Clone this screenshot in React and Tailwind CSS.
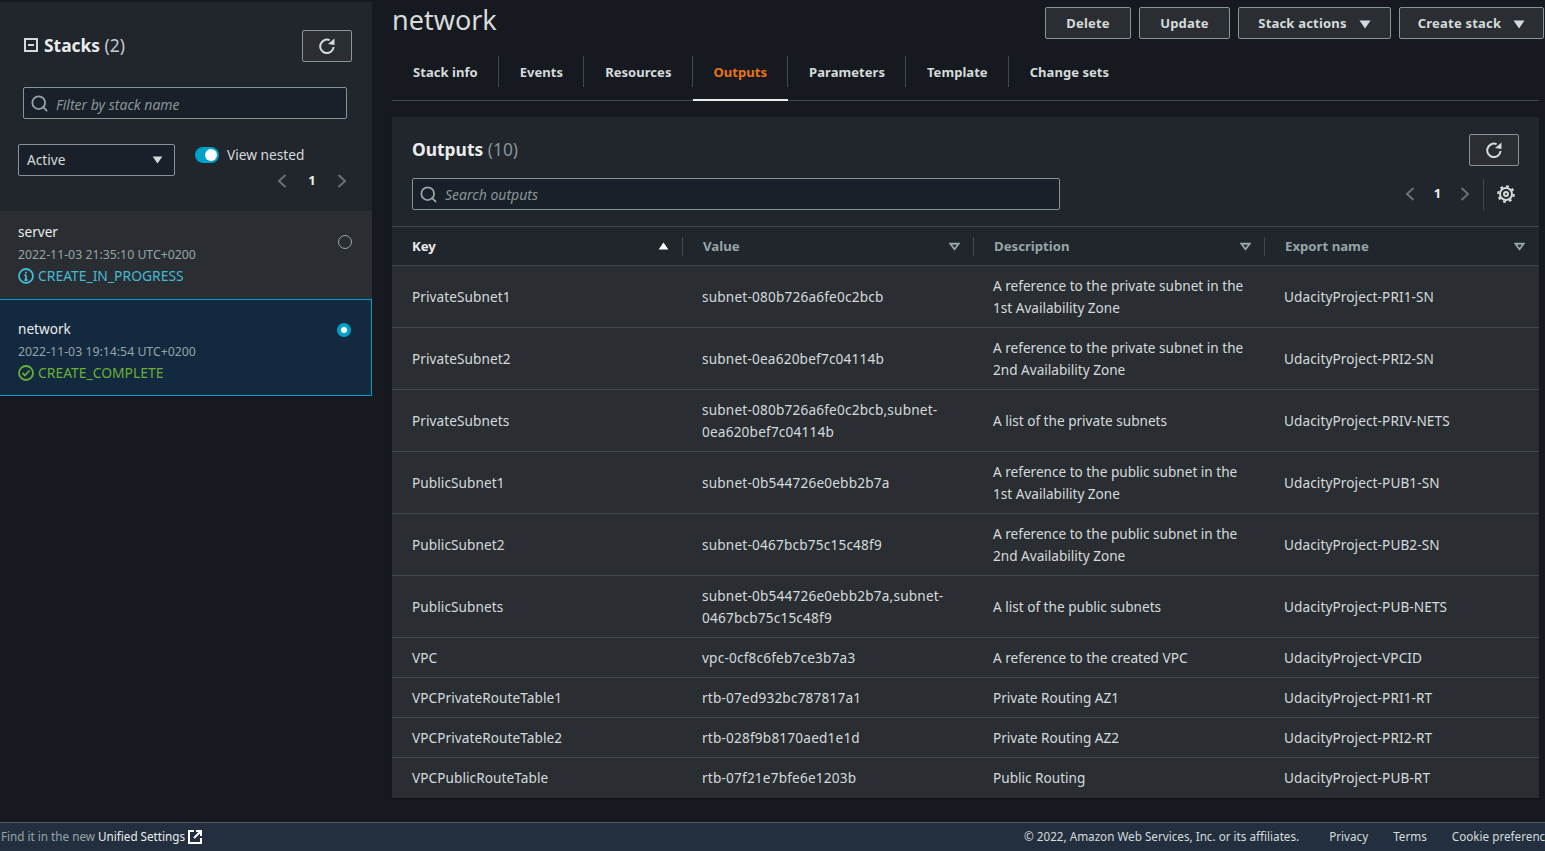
import React from "react";
import {Search} from "lucide-react";

const rows = [
    {key: "PrivateSubnet1", value: "subnet-080b726a6fe0c2bcb", desc: "A reference to the private subnet in the 1st Availability Zone", exp: "UdacityProject-PRI1-SN", tall: true},
    {key: "PrivateSubnet2", value: "subnet-0ea620bef7c04114b", desc: "A reference to the private subnet in the 2nd Availability Zone", exp: "UdacityProject-PRI2-SN", tall: true},
    {key: "PrivateSubnets", value: "subnet-080b726a6fe0c2bcb,subnet-0ea620bef7c04114b", desc: "A list of the private subnets", exp: "UdacityProject-PRIV-NETS", tall: true},
    {key: "PublicSubnet1", value: "subnet-0b544726e0ebb2b7a", desc: "A reference to the public subnet in the 1st Availability Zone", exp: "UdacityProject-PUB1-SN", tall: true},
    {key: "PublicSubnet2", value: "subnet-0467bcb75c15c48f9", desc: "A reference to the public subnet in the 2nd Availability Zone", exp: "UdacityProject-PUB2-SN", tall: true},
    {key: "PublicSubnets", value: "subnet-0b544726e0ebb2b7a,subnet-0467bcb75c15c48f9", desc: "A list of the public subnets", exp: "UdacityProject-PUB-NETS", tall: true},
    {key: "VPC", value: "vpc-0cf8c6feb7ce3b7a3", desc: "A reference to the created VPC", exp: "UdacityProject-VPCID"},
    {key: "VPCPrivateRouteTable1", value: "rtb-07ed932bc787817a1", desc: "Private Routing AZ1", exp: "UdacityProject-PRI1-RT"},
    {key: "VPCPrivateRouteTable2", value: "rtb-028f9b8170aed1e1d", desc: "Private Routing AZ2", exp: "UdacityProject-PRI2-RT"},
    {key: "VPCPublicRouteTable", value: "rtb-07f21e7bfe6e1203b", desc: "Public Routing", exp: "UdacityProject-PUB-RT"},
];

const tabs = ["Stack info", "Events", "Resources", "Outputs", "Parameters", "Template", "Change sets"];

const Caret = ({className = "w-[12px] h-[9px]", up = false}) => (
    <svg viewBox="0 0 12 9" className={className} fill="currentColor">
        <path d={up ? "M6 0.5 L11.5 8.5 L0.5 8.5 Z" : "M0.5 0.5 L11.5 0.5 L6 8.5 Z"}/>
    </svg>
);

const FilterCaret = () => (
    <svg viewBox="0 0 12 9" className="w-[11px] h-[9px] text-[#95a5a6]" fill="none" stroke="currentColor" strokeWidth="2">
        <path d="M1.5 1.5 L10.5 1.5 L6 7.5 Z"/>
    </svg>
);

const RefreshIcon = () => (
    <svg viewBox="0 0 16 16" className="w-[16px] h-[16px]" fill="none" stroke="currentColor" strokeWidth="2">
        <path d="M14.6 9 A6.7 6.7 0 1 1 10.6 2.2"/>
        <path d="M15.5 0.5 V7 L9 6 Z" fill="currentColor" stroke="none"/>
    </svg>
);

const GearIcon = () => (
    <svg viewBox="0 0 18 18" className="w-[18px] h-[18px] text-[#d5dbdb]" fill="none" stroke="currentColor" strokeWidth="2">
        <circle cx="9" cy="9" r="6"/>
        <circle cx="9" cy="9" r="7.8" strokeDasharray="2.9 3.2"/>
        <circle cx="9" cy="9" r="2"/>
    </svg>
);

const RefreshButton = () => (
    <button className="w-[50px] h-[32px] flex items-center justify-center border border-[#879596] rounded-[2px] bg-[#2a2e33] text-[#d5dbdb]">
        <RefreshIcon/>
    </button>
);

const Chevron = ({right = false}) => (
    <svg viewBox="0 0 10 14" className="w-[10px] h-[14px] text-[#687078]" fill="none" stroke="currentColor" strokeWidth="2">
        <path d={right ? "M1.5 1 L8 7 L1.5 13" : "M8.5 1 L2 7 L8.5 13"}/>
    </svg>
);

const Pager = ({width}) => (
    <div className="flex items-center">
        <Chevron/>
        <span className={`${width} text-center text-[13px] font-bold text-[#eaeded]`}>1</span>
        <Chevron right/>
    </div>
);

const ActionButton = ({label, caret, width}) => (
    <button className={`${width} h-[32px] pt-[2px] flex items-center justify-center gap-[12px] border border-[#879596] rounded-[2px] bg-[#2a2e33] text-[#d5dbdb] text-[13px] font-bold tracking-[0.2px]`}>
        {label}
        {caret && <Caret/>}
    </button>
);

const StackRow = ({name, time, status, selected}) => (
    <div className={selected
        ? "h-[97px] pl-[18px] pr-[20px] pt-[19px] flex justify-between bg-[#12293f] border-y border-r border-[#00a1c9]"
        : "h-[88px] pl-[18px] pr-[20px] pt-[11px] flex justify-between bg-[#2a2e33]"}>
        <div>
            <div className="text-[13.6px] leading-[20px] text-[#eaeded]">{name}</div>
            <div className="mt-[3px] text-[12.3px] leading-[20px] text-[#95a5a6]">{time}</div>
            <div className={`flex items-center gap-[4px] text-[13.9px] leading-[21px] ${selected ? "text-[#6aaf35]" : "text-[#44b9d6]"}`}>
                {selected ? (
                    <svg viewBox="0 0 16 16" className="w-[16px] h-[16px]" fill="none" stroke="currentColor" strokeWidth="1.8">
                        <circle cx="8" cy="8" r="7"/>
                        <path d="M4.5 8 L7 10.5 L11.5 5.5"/>
                    </svg>
                ) : (
                    <svg viewBox="0 0 16 16" className="w-[16px] h-[16px]" fill="none" stroke="currentColor" strokeWidth="1.8">
                        <circle cx="8" cy="8" r="7"/>
                        <path d="M8 7 V12 M6.5 12 H9.5 M6.5 7 H8 M8 3.8 V5.4"/>
                    </svg>
                )}
                {status}
            </div>
        </div>
        {selected ? (
            <div className="mt-[4px] w-[14px] h-[14px] rounded-full bg-[#00a1c9] flex items-center justify-center">
                <div className="w-[6px] h-[6px] rounded-full bg-white"/>
            </div>
        ) : (
            <div className="mt-[13px] w-[14px] h-[14px] rounded-full border border-[#95a5a6]"/>
        )}
    </div>
);

const HeadCell = ({label, active, last}) => (
    <div className="relative flex items-center justify-between pl-[20px] pr-[14px]">
        <span className={`pt-[2px] text-[13.2px] font-bold ${active ? "text-[#eaeded]" : "text-[#95a5a6]"}`}>{label}</span>
        {active ? <Caret up className="w-[11px] h-[8px] text-white"/> : <FilterCaret/>}
        {!last && <div className="absolute right-0 top-[10px] h-[19px] w-px bg-[#414750]"/>}
    </div>
);

const App = () => {
    return (
        <div className="h-[851px] w-[1545px] overflow-hidden flex flex-col bg-[#16191f] font-['Noto_Sans',sans-serif] text-[13px] text-[#d5dbdb]">
            <div className="flex flex-1 min-h-0">
                <aside className="w-[372px] shrink-0">
                    <div className="h-[209px] mt-[2px] bg-[#21252c]">
                        <div className="flex items-start justify-between pl-[24px] pr-[20px] pt-[28px]">
                            <div className="flex items-center gap-[6px] h-[30px]">
                                <div className="w-[14px] h-[14px] border-2 border-[#d5dbdb] flex items-center justify-center">
                                    <div className="w-[6px] h-[2px] bg-[#d5dbdb]"/>
                                </div>
                                <h2 className="text-[17.4px] leading-[30px] text-[#eaeded]">
                                    <span className="font-bold">Stacks</span> <span className="text-[#c4cbd1]">(2)</span>
                                </h2>
                            </div>
                            <RefreshButton/>
                        </div>
                        <div className="mt-[25px] ml-[23px] w-[324px] h-[32px] flex items-center gap-[7px] pl-[6px] border border-[#879596] rounded-[2px] bg-[#1a2029]">
                            <Search className="w-[19px] h-[19px] text-[#95a5a6]" strokeWidth={2.25}/>
                            <span className="pt-[2px] italic text-[14px] text-[#879596]">Filter by stack name</span>
                        </div>
                        <div className="mt-[25px] ml-[18px] flex items-start">
                            <div className="w-[157px] h-[32px] flex items-center justify-between pl-[8px] pr-[11px] border border-[#879596] rounded-[2px] bg-[#1a2029] text-[13.7px] text-[#d5dbdb]">
                                <span>Active</span>
                                <Caret className="w-[11px] h-[8px] text-[#d5dbdb]"/>
                            </div>
                            <div className="ml-[20px] w-[158px]">
                                <div className="flex items-center gap-[8px] h-[22px]">
                                    <div className="w-[24px] h-[16px] rounded-full bg-[#00a1c9] flex items-center justify-end pr-[2px]">
                                        <div className="w-[12px] h-[12px] rounded-full bg-white"/>
                                    </div>
                                    <span className="text-[13.7px] text-[#d5dbdb]">View nested</span>
                                </div>
                                <div className="flex justify-end mt-[5px] pr-[6px]">
                                    <Pager width="w-[50px]"/>
                                </div>
                            </div>
                        </div>
                    </div>
                    <StackRow name="server" time="2022-11-03 21:35:10 UTC+0200" status="CREATE_IN_PROGRESS"/>
                    <StackRow name="network" time="2022-11-03 19:14:54 UTC+0200" status="CREATE_COMPLETE" selected/>
                </aside>

                <main className="ml-[20px] w-[1147px]">
                    <div className="flex items-start justify-between pt-[7px] h-[39px]">
                        <h1 className="text-[27px] leading-[26px] text-[#d5dbdb]">network</h1>
                        <div className="flex gap-[8px] mr-[-5px]">
                            <ActionButton label="Delete" width="w-[86px]"/>
                            <ActionButton label="Update" width="w-[91px]"/>
                            <ActionButton label="Stack actions" caret width="w-[153px]"/>
                            <ActionButton label="Create stack" caret width="w-[145px]"/>
                        </div>
                    </div>
                    <div className="mt-[12px] h-[50px] flex items-center border-b border-[#414750]">
                        {tabs.map((tab, i) => (
                            <div key={tab} className={`relative h-full flex items-center pb-[5px] px-[21px] text-[13px] tracking-[0.05px] font-bold ${tab === "Outputs" ? "text-[#ec7211]" : "text-[#d5dbdb]"}`}>
                                {tab}
                                {i < tabs.length - 1 && <div className="absolute right-0 top-[5px] h-[31px] w-px bg-[#414750]"/>}
                                {tab === "Outputs" && <div className="absolute left-0 right-0 bottom-[-1px] h-[2px] bg-[#eaeded]"/>}
                            </div>
                        ))}
                    </div>

                    <section className="mt-[16px] bg-[#21252c] shadow-[0_1px_1px_rgba(0,0,0,0.3)]">
                        <div className="h-[110px] relative border-b border-[#414750] px-[20px] pt-[17px]">
                            <h2 className="text-[17.4px] leading-[30px] text-[#eaeded]">
                                <span className="font-bold">Outputs</span> <span className="text-[#879596]">(10)</span>
                            </h2>
                            <div className="mt-[14px] w-[648px] h-[32px] flex items-center gap-[7px] pl-[6px] border border-[#879596] rounded-[2px] bg-[#1a2029]">
                                <Search className="w-[19px] h-[19px] text-[#95a5a6]" strokeWidth={2.25}/>
                                <span className="italic text-[14px] text-[#879596]">Search outputs</span>
                            </div>
                            <div className="absolute right-[20px] top-[17px]">
                                <RefreshButton/>
                            </div>
                            <div className="absolute right-[24px] top-[61px] h-[32px] flex items-center">
                                <Pager width="w-[45px]"/>
                                <div className="ml-[13px] mr-[13px] h-[32px] w-px bg-[#414750]"/>
                                <GearIcon/>
                            </div>
                        </div>
                        <div className="grid grid-cols-[291px_291px_291px_274px] h-[39px] border-b border-[#414750]">
                            <HeadCell label="Key" active/>
                            <HeadCell label="Value"/>
                            <HeadCell label="Description"/>
                            <HeadCell label="Export name" last/>
                        </div>
                        {rows.map((row, i) => (
                            <div key={row.key} className={`grid grid-cols-[291px_291px_291px_274px] items-center bg-[#2a2e33] text-[13.6px] leading-[22px] text-[#d5dbdb] ${row.tall ? "h-[62px]" : "h-[40px]"} ${i < rows.length - 1 ? "border-b border-[#414750]" : ""}`}>
                                <div className="pl-[20px] tracking-[0.08px]">{row.key}</div>
                                <div className="pl-[19px] pr-[30px] tracking-[0.2px] break-words">{row.value}</div>
                                <div className="pl-[19px] pr-[20px]">{row.desc}</div>
                                <div className="pl-[19px] tracking-[0.1px]">{row.exp}</div>
                            </div>
                        ))}
                    </section>
                </main>
            </div>

            <footer className="h-[29px] shrink-0 flex items-center justify-between whitespace-nowrap bg-[#232f3e] border-t border-[#545b64] text-[11.7px] text-[#d5dbdb]">
                <div className="flex items-center pl-[1px]">
                    <span className="text-[#95a5a6]">Find it in the new&nbsp;</span>
                    <span className="text-[#eaeded]">Unified Settings</span>
                    <svg viewBox="0 0 14 14" className="ml-[3px] w-[14px] h-[14px] text-white" fill="none" stroke="currentColor" strokeWidth="2">
                        <path d="M6 1 H1 V13 H13 V8 M8 1 H13 V6 M13 1 L6 8"/>
                    </svg>
                </div>
                <div className="flex items-center w-[521px] shrink-0 overflow-hidden">
                    <span>© 2022, Amazon Web Services, Inc. or its affiliates.</span>
                    <span className="ml-[30px]">Privacy</span>
                    <span className="ml-[25px]">Terms</span>
                    <span className="ml-[25px]">Cookie preferences</span>
                </div>
            </footer>
        </div>
    );
};

export default App;
